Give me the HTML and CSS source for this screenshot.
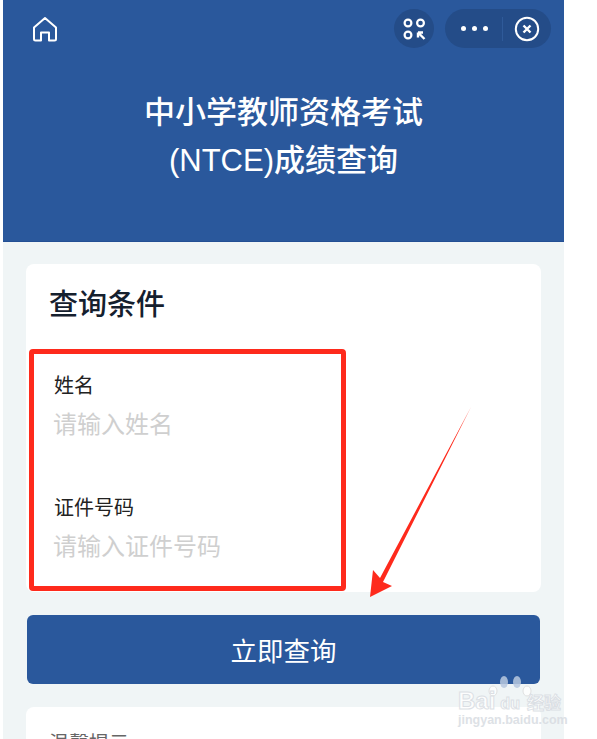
FILE: index.html
```html
<!DOCTYPE html>
<html lang="zh-CN">
<head>
    <meta charset="UTF-8">
    <meta name="viewport" content="width=device-width, initial-scale=1.0">
    <title>成绩查询</title>
    <link rel="stylesheet" href="styles.css">
</head>
<body>
    <div class="phone">
        <header class="header">
            <div class="topbar">
                <svg class="home-icon" width="26" height="26" viewBox="0 0 26 26" fill="none" stroke="#fff" stroke-width="2" stroke-linejoin="round">
                    <path d="M13 2 L24 11.5 V23 Q24 24.5 22.5 24.5 H17 V16.5 H9 V24.5 H3.5 Q2 24.5 2 23 V11.5 Z"/>
                </svg>
                <div class="topbar-right">
                    <div class="scan-btn">
                        <svg width="24" height="24" viewBox="0 0 24 24" fill="none" stroke="#fff" stroke-width="2.2">
                            <circle cx="6" cy="6" r="3.4"/>
                            <circle cx="18.5" cy="6" r="3.4"/>
                            <circle cx="6" cy="18" r="3.4"/>
                            <path d="M16 15.5 H21 M16 15.5 V20.5 M16 15.5 L22.5 22" stroke-width="2.4"/>
                        </svg>
                    </div>
                    <div class="capsule">
                        <div class="dots"><i></i><i></i><i></i></div>
                        <div class="capsule-line"></div>
                        <svg width="26" height="26" viewBox="0 0 26 26" fill="none" stroke="#fff">
                            <circle cx="13" cy="13" r="11.2" stroke-width="2"/>
                            <path d="M9.5 9.5 L16.5 16.5 M16.5 9.5 L9.5 16.5" stroke-width="2.4"/>
                        </svg>
                    </div>
                </div>
            </div>
            <h1 class="title">中小学教师资格考试<br>(NTCE)成绩查询</h1>
        </header>

        <main class="content">
            <section class="card">
                <h2 class="card-title">查询条件</h2>
                <div class="field">
                    <div class="field-label">姓名</div>
                    <div class="field-input">请输入姓名</div>
                </div>
                <div class="field">
                    <div class="field-label">证件号码</div>
                    <div class="field-input">请输入证件号码</div>
                </div>
            </section>
            <button class="submit" type="button">立即查询</button>
            <section class="card tips">
                <div class="tips-title">温馨提示</div>
            </section>
        </main>
    </div>

    <!-- annotations on top of the screenshot -->
    <div class="red-box"></div>
    <svg class="red-arrow" width="110" height="195" viewBox="0 0 110 195">
        <polygon fill="#fe2a1c" points="103,0 15,175 24,179 2,190 5,163 12,171"/>
    </svg>
    <div class="watermark">
        <svg class="paw" width="44" height="40" viewBox="0 0 44 40">
            <ellipse cx="16" cy="7" rx="4" ry="6" fill="#b9c9e0"/>
            <ellipse cx="29" cy="7" rx="4" ry="6" fill="#b9c9e0"/>
            <ellipse cx="5" cy="16" rx="4" ry="5" fill="#fff" stroke="#ddd"/>
            <ellipse cx="39" cy="16" rx="4" ry="5" fill="#fff" stroke="#ddd"/>
        </svg>
        <div class="wm-brand">Bai<span class="wm-du">du</span><span class="wm-jy">经验</span></div>
        <div class="wm-url">jingyan.baidu.com</div>
    </div>
</body>
</html>
```

FILE: styles.css
```css
html, body {
    height: 739px;
    overflow: hidden;
}

body {
    margin: 0;
    background: #fff;
    font-family: "Liberation Sans", "Noto Sans CJK SC", sans-serif;
    position: relative;
}

.phone {
    width: 561px;
    height: 739px;
    margin-left: 3px;
    background: #f0f5f6;
    overflow: hidden;
}

.header {
    height: 241px;
    background: #2a589c;
    border-bottom: 1px solid #234f94;
    box-sizing: content-box;
}

.topbar {
    display: flex;
    justify-content: space-between;
    align-items: flex-start;
    padding: 9px 13px 0 29px;
}

.home-icon {
    margin-top: 7px;
}

.topbar-right {
    display: flex;
    gap: 11px;
}

.scan-btn {
    width: 40px;
    height: 39px;
    border-radius: 50%;
    background: #244c88;
    display: flex;
    align-items: center;
    justify-content: center;
}

.capsule {
    width: 106px;
    height: 39px;
    border-radius: 20px;
    background: #244c88;
    display: flex;
    align-items: center;
    box-sizing: border-box;
    padding-left: 16px;
}

.dots {
    display: flex;
    gap: 6px;
}

.dots i {
    width: 5px;
    height: 5px;
    border-radius: 50%;
    background: #fff;
}

.capsule-line {
    width: 1px;
    height: 24px;
    background: #2f5a99;
    margin: 0 11px 0 14px;
}

.title {
    margin: 41px 0 0;
    color: #fff;
    font-size: 31px;
    font-weight: 500;
    line-height: 48px;
    text-align: center;
}

.content {
    padding: 22px 23px 0;
}

.card {
    background: #fff;
    border-radius: 8px;
}

.card:first-child {
    height: 328px;
    padding: 21px 23px 0;
    box-sizing: border-box;
}

.card-title {
    margin: 0 0 47px;
    color: #15202e;
    font-size: 29px;
    font-weight: 500;
    line-height: 40px;
}

.field {
    height: 122px;
    padding-left: 4px;
}

.field-label {
    color: #222;
    font-size: 20px;
    line-height: 28px;
    margin-left: 1px;
}

.field-input {
    margin-top: 7px;
    color: #cfcfcf;
    font-size: 24px;
    line-height: 36px;
}

.submit {
    display: block;
    width: 513px;
    height: 69px;
    margin: 23px 1px;
    padding: 0;
    border: none;
    border-radius: 6px;
    background: #2a589c;
    color: #fff;
    font-family: inherit;
    font-size: 26.5px;
    font-weight: 400;
    cursor: pointer;
}

.tips {
    height: 80px;
    padding: 23px 23px 0;
    box-sizing: border-box;
}

.tips-title {
    color: #666;
    font-size: 20px;
    line-height: 28px;
}

.red-box {
    position: absolute;
    left: 29px;
    top: 349px;
    width: 317px;
    height: 242px;
    box-sizing: border-box;
    border: 5px solid #fe2a1c;
    border-radius: 4px;
}

.red-arrow {
    position: absolute;
    left: 368px;
    top: 407px;
}

.watermark {
    position: absolute;
    left: 456px;
    top: 675px;
    width: 110px;
    height: 56px;
    opacity: 0.85;
}

.paw {
    position: absolute;
    left: 32px;
    top: 0;
}

.wm-brand {
    position: absolute;
    left: 2px;
    top: 12px;
    color: #fff;
    -webkit-text-stroke: 1px #d8dce2;
    font-size: 24px;
    font-weight: 700;
    line-height: 28px;
    white-space: nowrap;
}

.wm-du {
    font-size: 16px;
    margin-left: 5px;
}

.wm-jy {
    font-size: 17px;
    margin-left: 7px;
}

.wm-url {
    position: absolute;
    left: 2px;
    top: 38px;
    color: #d8dce2;
    font-size: 12.5px;
    font-weight: 700;
    line-height: 14px;
    white-space: nowrap;
}
```
